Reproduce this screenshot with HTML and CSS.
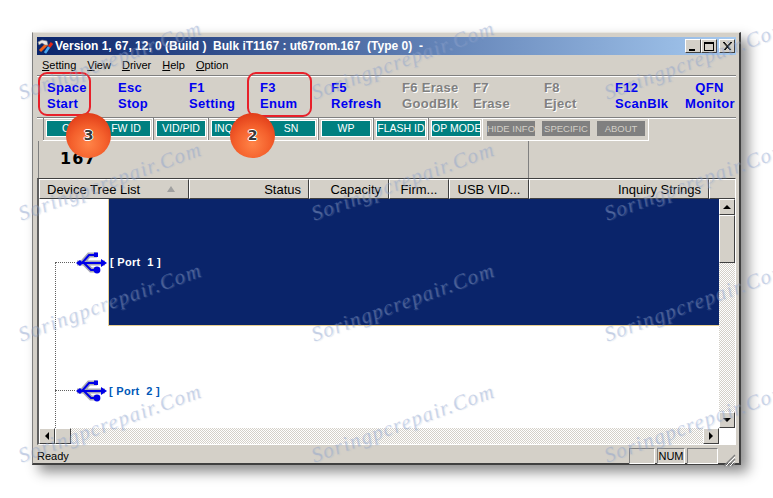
FILE: index.html
```html
<!DOCTYPE html>
<html>
	<head>
		<title>Version 1, 67, 12, 0</title>
		<meta charset="utf-8">
		<link rel="stylesheet" href="styles.css">
	</head>

	<body>
		<div class="window">
			<div class="titlebar">
				<svg class="appicon" width="17" height="15" viewBox="0 0 17 15">
					<path d="M10 5 L3 12" stroke="#f06018" stroke-width="3"/>
					<path d="M1 3 L5 1 L10 2 L11 6 L8 6 L5 4 L2 6 Z" fill="#e8e8e8" stroke="#808080" stroke-width=".6"/>
					<path d="M15 4 L12 8" stroke="#e02818" stroke-width="3"/>
					<path d="M12 8 L8 14" stroke="#48a8f0" stroke-width="2.6"/>
				</svg>
				<div class="title">Version 1, 67, 12, 0 (Build ) &nbsp;Bulk iT1167 : ut67rom.167 &nbsp;(Type 0) &nbsp;-</div>
				<div class="capbtns">
					<div class="capbtn"><span class="ic-min"></span></div>
					<div class="capbtn"><span class="ic-max"></span></div>
					<div class="capbtn close">
						<svg width="9" height="8" viewBox="0 0 9 8"><path d="M1 0 L8 8 M0 0 L7 8 M8 0 L1 8 M9 0 L2 8" stroke="#000" stroke-width="1" fill="none"/></svg>
					</div>
				</div>
			</div>

			<div class="menubar">
				<span><u>S</u>etting</span>
				<span><u>V</u>iew</span>
				<span><u>D</u>river</span>
				<span><u>H</u>elp</span>
				<span><u>O</u>ption</span>
			</div>

			<div class="toolbar">
				<div class="tool">Space<br>Start</div>
				<div class="tool">Esc<br>Stop</div>
				<div class="tool">F1<br>Setting</div>
				<div class="tool">F3<br>Enum</div>
				<div class="tool">F5<br>Refresh</div>
				<div class="tool off">F6 Erase<br>GoodBlk</div>
				<div class="tool off">F7<br>Erase</div>
				<div class="tool off">F8<br>Eject</div>
				<div class="tool">F12<br>ScanBlk</div>
				<div class="tool last">QFN<br>Monitor</div>
			</div>

			<div class="tabs">
				<div class="tab"><span>CID</span></div>
				<div class="tab"><span>FW ID</span></div>
				<div class="tab"><span>VID/PID</span></div>
				<div class="tab"><span>INQUIRY</span></div>
				<div class="tab"><span>SN</span></div>
				<div class="tab"><span>WP</span></div>
				<div class="tab"><span>FLASH ID</span></div>
				<div class="tab"><span>OP MODE</span></div>
				<div class="tab grey"><span>HIDE INFO</span></div>
				<div class="tab grey"><span>SPECIFIC</span></div>
				<div class="tab grey"><span>ABOUT</span></div>
			</div>

			<div class="infopanel">
				<div class="bignum">167</div>
				<div class="inforight"></div>
			</div>

			<div class="listwrap">
				<div class="listhead">
					<div class="col c1">Device Tree List<i class="sort"></i></div>
					<div class="col c2">Status</div>
					<div class="col c3">Capacity</div>
					<div class="col c4">Firm...</div>
					<div class="col c5">USB VID...</div>
					<div class="col c6">Inquiry Strings</div>
					<div class="col c7"></div>
				</div>

				<div class="listmain">
					<div class="tree">
						<div class="port selected">
							<div class="stub"></div>
							<svg class="usb" width="33" height="23" viewBox="0 0 33 23">
								<use href="#usbicon"/>
							</svg>
							<div class="portname">[ Port &nbsp;1 ]</div>
						</div>
						<div class="port">
							<div class="stub"></div>
							<svg class="usb" width="33" height="23" viewBox="0 0 33 23">
								<use href="#usbicon"/>
							</svg>
							<div class="portname">[ Port &nbsp;2 ]</div>
						</div>
					</div>
					<div class="vscroll">
						<div class="sbtn"><i class="arr up"></i></div>
						<div class="vthumb"></div>
						<div class="track"></div>
						<div class="sbtn"><i class="arr down"></i></div>
					</div>
				</div>

				<div class="hscroll">
					<div class="sbtn"><i class="arr left"></i></div>
					<div class="sbtn"></div>
					<div class="track"></div>
					<div class="sbtn"><i class="arr right"></i></div>
					<div class="corner"></div>
				</div>
			</div>

			<div class="statusbar">
				<div class="ready">Ready</div>
				<div class="pane p1"></div>
				<div class="pane p2">NUM</div>
				<div class="pane p3"></div>
				<svg class="grip" width="13" height="13" viewBox="0 0 13 13">
					<path d="M12 1 L1 12 M12 5 L5 12 M12 9 L9 12" stroke="#808080" stroke-width="1.4"/>
					<path d="M12 3 L3 12 M12 7 L7 12" stroke="#fff" stroke-width="1"/>
				</svg>
			</div>

			<!-- annotations painted on the screenshot -->
			<div class="mark m-space"></div>
			<div class="mark m-enum"></div>
			<div class="ball b3">3</div>
			<div class="ball b2">2</div>
		</div>

		<div class="wmarks">
			<span>Soringpcrepair.Com</span><span>Soringpcrepair.Com</span><span>Soringpcrepair.Com</span>
			<span>Soringpcrepair.Com</span><span>Soringpcrepair.Com</span><span>Soringpcrepair.Com</span>
			<span>Soringpcrepair.Com</span><span>Soringpcrepair.Com</span><span>Soringpcrepair.Com</span>
			<span>Soringpcrepair.Com</span><span>Soringpcrepair.Com</span><span>Soringpcrepair.Com</span>
		</div>

		<svg width="0" height="0" class="defs">
			<defs>
				<g id="usbicon">
					<g fill="none" stroke="#a8a8b4" stroke-width="5">
						<path d="M2 12 H30 M7 12 L14 4 H22 M9 12 L16 19 H22"/>
					</g>
					<g fill="none" stroke="#0000e8" stroke-width="2">
						<path d="M3 12 H28 M7 12 L14 4 H21 M9 12 L16 19 H21"/>
					</g>
					<path d="M26 8 L32 12 L26 16 Z" fill="#0000e8"/>
					<path d="M1 12 L5 9 L8 12 L5 15 Z" fill="#0000e8"/>
					<circle cx="22" cy="19" r="3.4" fill="#0000e8"/>
					<rect x="19" y="1.500" width="4" height="4.500" fill="#0000e8"/>
				</g>
			</defs>
		</svg>
	</body>
</html>
```

FILE: styles.css
```css
html, body {
	margin: 0;
	padding: 0;
	height: 100%;
	background: #fff;
	overflow: hidden;
}

.defs {
	display: block;
}

.window {
	position: relative;
	box-sizing: border-box;
	width: 709px;
	height: 433px;
	margin: 32px 0 0 32px;
	padding: 4px 3px 0 4px;
	display: flex;
	flex-direction: column;
	background: #d4d0c8;
	border-right: 2px solid #404040;
	border-bottom: 2px solid #404040;
	border-top: 1px solid #e8e6e0;
	border-left: 1px solid #808080;
	box-shadow: 7px 7px 12px rgba(0, 0, 0, .45);
	font-family: "Liberation Sans", Arial, sans-serif;
	font-size: 11px;
	color: #000;
}

/* title bar */
.titlebar {
	height: 18px;
	flex: none;
	display: flex;
	align-items: center;
	background: linear-gradient(to right, #0a246a, #a6caf0);
}

.appicon {
	margin-right: 1px;
	flex: none;
}

.title {
	flex: 1;
	color: #fff;
	font: bold 12px "Liberation Sans", sans-serif;
	white-space: nowrap;
}

.capbtns {
	display: flex;
	margin-right: 1px;
}

.capbtn {
	box-sizing: border-box;
	width: 16px;
	height: 14px;
	display: flex;
	align-items: center;
	justify-content: center;
	position: relative;
	background: #d4d0c8;
	border: 1px solid;
	border-color: #fff #404040 #404040 #fff;
}

.capbtn.close {
	margin-left: 2px;
}

.ic-min {
	width: 6px;
	height: 2px;
	background: #000;
	margin-top: 7px;
	margin-right: 3px;
}

.ic-max {
	box-sizing: border-box;
	width: 10px;
	height: 9px;
	border: 1px solid #000;
	border-top-width: 2px;
}

/* menu */
.menubar {
	height: 20px;
	flex: none;
	display: flex;
	align-items: center;
	gap: 11px;
	padding-left: 5px;
	border-bottom: 1px solid #808080;
	box-shadow: 0 1px 0 #fff;
}

.menubar u {
	text-decoration: underline;
}

/* big key toolbar */
.toolbar {
	height: 41px;
	flex: none;
	display: flex;
	padding-left: 10px;
	border-bottom: 1px solid #808080;
	box-shadow: 0 1px 0 #fff;
}

.tool {
	width: 71px;
	flex: none;
	padding-top: 4px;
	font: bold 13px/16px "Liberation Sans", sans-serif;
	letter-spacing: .3px;
	color: #0000f0;
	white-space: nowrap;
}

.tool.off {
	color: #808080;
	text-shadow: 1px 1px 0 #fff;
}

.tool.last {
	width: 49px;
	margin-left: -1px;
	text-align: center;
}

/* teal tabs */
.tabs {
	width: 606px;
	height: 23px;
	margin-left: 6px;
	flex: none;
	display: flex;
	border-bottom: 1px solid #fff;
	border-right: 1px solid #fff;
	box-sizing: border-box;
}

.tab {
	box-sizing: border-box;
	width: 55px;
	flex: none;
	padding: 3px 2px 0 3px;
	border-left: 1px solid #808080;
	border-right: 1px solid #fff;
	height: 22px;
}

.tab span {
	display: block;
	height: 15px;
	background: #008080;
	color: #fff;
	font-size: 10.5px;
	line-height: 15px;
	text-align: center;
	white-space: nowrap;
	overflow: hidden;
	outline: 1px solid #fff;
}

.tab.grey {
	border-color: transparent;
}

.tab.grey span {
	background: #808080;
	color: #d4d0c8;
	font-size: 9.5px;
	outline: none;
}

.infopanel {
	height: 37px;
	flex: none;
	display: flex;
	border-left: 1px solid #808080;
	margin-left: 1px;
}

.bignum {
	box-sizing: border-box;
	width: 489px;
	padding: 8px 0 0 21px;
	font: bold 16px "DejaVu Sans", sans-serif;
	letter-spacing: 1px;
}

.inforight {
	flex: 1;
	border-left: 1px solid #808080;
}

/* list view */
.listwrap {
	flex: none;
	height: 265px;
	margin-left: 0;
	display: flex;
	flex-direction: column;
	border-top: 1px solid #404040;
	border-left: 2px solid #606060;
	border-right: 1px solid #fff;
	border-bottom: 1px solid #fff;
}

.listhead {
	height: 20px;
	flex: none;
	display: flex;
	background: #d4d0c8;
	font-size: 13px;
	line-height: 19px;
}

.col {
	box-sizing: border-box;
	height: 20px;
	padding: 0 7px;
	border-top: 1px solid #fff;
	border-left: 1px solid #fff;
	border-right: 1px solid #404040;
	border-bottom: 1px solid #404040;
	white-space: nowrap;
}

.c1 { width: 150px; display: flex; align-items: center; }
.c2 { width: 120px; text-align: right; }
.c3 { width: 80px; text-align: right; }
.c4 { width: 60px; text-align: center; padding: 0; }
.c5 { width: 80px; text-align: center; padding: 0; }
.c6 { width: 180px; text-align: right; }
.c7 { flex: 1; border-right: 0; border-bottom-color: #404040; }

.sort {
	width: 0;
	height: 0;
	margin-left: 27px;
	border: 4px solid transparent;
	border-top: 0;
	border-bottom: 6px solid #a0a0a0;
}

.listmain {
	flex: 1;
	min-height: 0;
	display: flex;
	background: #fff;
}

.tree {
	flex: 1;
	position: relative;
	overflow: hidden;
}

/* dotted trunk of the tree */
.tree::before {
	content: "";
	position: absolute;
	left: 16px;
	top: 64px;
	bottom: 0;
	border-left: 1px dotted #606060;
}

.port {
	height: 127px;
	margin-bottom: 1px;
	display: flex;
	align-items: center;
	padding-left: 16px;
}

.stub {
	width: 20px;
	flex: none;
	border-top: 1px dotted #606060;
}

.usb {
	flex: none;
}

.portname {
	box-sizing: border-box;
	width: 612px;
	padding-left: 1px;
	font-size: 11px;
	font-weight: bold;
	letter-spacing: .3px;
	color: #0058b8;
	white-space: nowrap;
}

.port.selected .portname {
	height: 127px;
	line-height: 127px;
	background: #0a246a;
	color: #fff;
	border-left: 1px solid #e8cf90;
	border-bottom: 1px solid #e8cf90;
}

.vscroll {
	width: 16px;
	flex: none;
	display: flex;
	flex-direction: column;
}

.track {
	flex: 1;
	background: repeating-conic-gradient(#d4d0c8 0 25%, #fff 0 50%) 0 0 / 2px 2px;
}

.sbtn {
	box-sizing: border-box;
	width: 16px;
	height: 16px;
	flex: none;
	display: flex;
	align-items: center;
	justify-content: center;
	background: #d4d0c8;
	border: 1px solid;
	border-color: #fff #404040 #404040 #fff;
}

.vthumb {
	box-sizing: border-box;
	height: 48px;
	flex: none;
	background: #d4d0c8;
	border: 1px solid;
	border-color: #fff #404040 #404040 #fff;
}

.arr {
	width: 0;
	height: 0;
	border: 4px solid transparent;
}

.arr.up { border-top: 0; border-bottom-color: #000; }
.arr.down { border-bottom: 0; border-top-color: #000; }
.arr.left { border-left: 0; border-right-color: #000; }
.arr.right { border-right: 0; border-left-color: #000; }

.hscroll {
	height: 16px;
	flex: none;
	display: flex;
}

.corner {
	width: 16px;
	flex: none;
	background: #fff;
}

/* status bar */
.statusbar {
	flex: 1;
	display: flex;
	align-items: center;
	padding-bottom: 4px;
}

.ready {
	flex: 1;
	font-size: 11px;
}

.pane {
	box-sizing: border-box;
	height: 16px;
	margin-right: 2px;
	line-height: 14px;
	text-align: center;
	font-size: 11px;
	border: 1px solid;
	border-color: #808080 #fff #fff #808080;
}

.p1 { width: 26px; }
.p2 { width: 28px; }
.p3 { width: 31px; }

.grip {
	margin: 9px 0 0 3px;
	flex: none;
}

/* red annotations */
.mark {
	position: absolute;
	box-sizing: border-box;
	border: 2px solid #e8202a;
	border-radius: 9px;
}

.m-space { left: 5px; top: 39px; width: 53px; height: 44px; }
.m-enum { left: 214px; top: 39px; width: 65px; height: 45px; }

.ball {
	position: absolute;
	top: 80px;
	width: 45px;
	height: 45px;
	border-radius: 50%;
	background: radial-gradient(circle at 50% 68%, #ff8448 0, #f4602c 45%, #dc3414 90%, #b82008 100%);
	font: bold 14px/45px "DejaVu Sans", sans-serif;
	text-align: center;
	color: #383838;
	text-shadow: 1px 0 0 #fff, -1px 0 0 #fff, 0 1px 0 #fff, 0 -1px 0 #fff;
}

.b3 { left: 33px; }
.b2 { left: 197px; }

/* site watermark over everything */
.wmarks {
	position: absolute;
	left: 10px;
	top: 0;
	right: 0;
	bottom: 0;
	overflow: hidden;
	display: grid;
	grid-template-columns: repeat(3, 293px);
	grid-auto-rows: 121px;
	pointer-events: none;
}

.wmarks span {
	width: 200px;
	height: 121px;
	text-align: center;
	font: italic 21px/121px "Liberation Serif", serif;
	letter-spacing: 1.3px;
	white-space: nowrap;
	color: rgba(140, 160, 205, .38);
	text-shadow: 1px 1px 1px rgba(150, 170, 205, .25);
	transform: rotate(-20deg);
}
```
